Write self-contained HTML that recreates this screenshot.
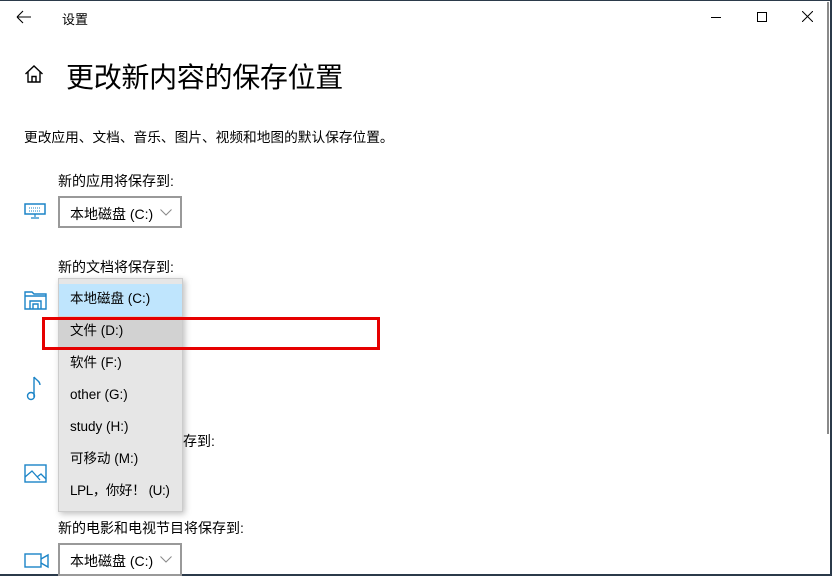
<!DOCTYPE html>
<html><head><meta charset="utf-8"><style>
body{margin:0;width:832px;height:576px;overflow:hidden;background:#fff;font-family:"Liberation Sans","Noto Sans CJK SC",sans-serif;color:#000;position:relative}
.a{position:absolute}
.t{font-size:14px}
.box{position:absolute;border:2px solid #999;background:#fff;box-sizing:border-box;width:124px;height:32px;font-size:14px;padding:6px 0 0 10px}
.box svg{position:absolute;right:8px;top:11px}
.it{position:absolute;left:0;width:123px;height:32px;font-size:13.5px;padding-left:11px;line-height:30px;box-sizing:border-box;white-space:nowrap}
</style></head><body>
<div class="a" style="left:0;top:0;width:832px;height:1px;background:#2b3a4a"></div>
<div class="a" style="right:0;top:0;width:2px;height:576px;background:#2b3a4a"></div>
<div class="a" style="left:0;bottom:0;width:832px;height:2px;background:#2b3a4a"></div>
<div class="a" style="left:827px;top:2px;width:2px;height:432px;background:#8a8a8a"></div>
<svg class="a" style="left:16px;top:10px" width="16" height="14"><path d="M1 7H15M1 7L7 1M1 7L7 13" stroke="#000" fill="none" stroke-width="1.1"/></svg>
<div class="a" style="left:62px;top:9px;font-size:13px">设置</div>
<div class="a" style="left:711px;top:17px;width:10px;height:1px;background:#000"></div>
<div class="a" style="left:757px;top:12px;width:8px;height:8px;border:1px solid #000"></div>
<svg class="a" style="left:802px;top:11px" width="11" height="11"><path d="M0 0L11 11M11 0L0 11" stroke="#000" stroke-width="1"/></svg>
<svg class="a" style="left:24px;top:64px" width="20" height="20"><path d="M1.5 10L10 2L18.5 10M4 8V18H16V8M8 18V12.5H12V18" stroke="#000" fill="none" stroke-width="1.4"/></svg>
<div class="a" style="left:66px;top:56px;font-size:28px;letter-spacing:-0.3px">更改新内容的保存位置</div>
<div class="a" style="left:24px;top:126px;font-size:13.7px">更改应用、文档、音乐、图片、视频和地图的默认保存位置。</div>
<div class="a t" style="left:58px;top:171px">新的应用将保存到:</div>
<svg class="a" style="left:24px;top:203px" width="22" height="16"><rect x="1" y="1" width="20" height="10" fill="none" stroke="#1b84c7" stroke-width="1.5"/><path d="M5 5h12M5 8h12" stroke="#1b84c7" stroke-width="1" stroke-dasharray="1 1"/><path d="M11 11v3M7 15h8" stroke="#1b84c7" stroke-width="1.2"/></svg>
<div class="box" style="left:58px;top:196px">本地磁盘 (C:)<svg width="12" height="7"><path d="M0.5 0.5L6 6L11.5 0.5" stroke="#888" fill="none"/></svg></div>
<div class="a t" style="left:58px;top:257px">新的文档将保存到:</div>
<svg class="a" style="left:24px;top:290px" width="24" height="20"><path d="M1 2h7l2 2h12v15H1z M1 6h21 M6 19v-8h11v8 M9 19v-5h5v5" stroke="#1b84c7" fill="none" stroke-width="1.4"/></svg>
<svg class="a" style="left:26px;top:375px" width="16" height="26"><path d="M8 2v20 M8 2c2 3 6 4 6 8" stroke="#1b84c7" fill="none" stroke-width="1.4"/><circle cx="5" cy="21" r="3.5" stroke="#1b84c7" fill="none" stroke-width="1.4"/></svg>
<div class="a t" style="left:183px;top:431px">存到:</div>
<svg class="a" style="left:24px;top:464px" width="24" height="20"><rect x="1" y="1" width="21" height="17" fill="none" stroke="#1b84c7" stroke-width="1.4"/><path d="M1 13l7-6 8 9 M13 13l4-3 5 5" stroke="#1b84c7" fill="none" stroke-width="1.3"/></svg>
<div class="a t" style="left:58px;top:518px">新的电影和电视节目将保存到:</div>
<svg class="a" style="left:24px;top:553px" width="26" height="16"><rect x="1" y="1" width="16" height="13" fill="none" stroke="#1b84c7" stroke-width="1.4"/><path d="M17 6l7-4v12l-7-4" stroke="#1b84c7" fill="none" stroke-width="1.4"/></svg>
<div class="box" style="left:58px;top:543px;height:33px">本地磁盘 (C:)<svg width="12" height="7"><path d="M0.5 0.5L6 6L11.5 0.5" stroke="#888" fill="none"/></svg></div>
<div class="a" style="left:58px;top:278px;width:125px;height:234px;background:#e6e6e6;border:1px solid #ccc;box-sizing:border-box;box-shadow:2px 2px 6px rgba(0,0,0,.25)">
<div class="it" style="top:5px;background:#bfe5fd">本地磁盘 (C:)</div>
<div class="it" style="top:37px;background:#d2d2d2">文件 (D:)</div>
<div class="it" style="top:69px">软件 (F:)</div>
<div class="it" style="top:101px">other (G:)</div>
<div class="it" style="top:133px">study (H:)</div>
<div class="it" style="top:165px">可移动 (M:)</div>
<div class="it" style="top:197px;letter-spacing:-0.4px">LPL，你好！ (U:)</div>
</div>
<div class="a" style="left:42px;top:317px;width:338px;height:33px;border:3px solid #e60000;box-sizing:border-box"></div>
</body></html>
